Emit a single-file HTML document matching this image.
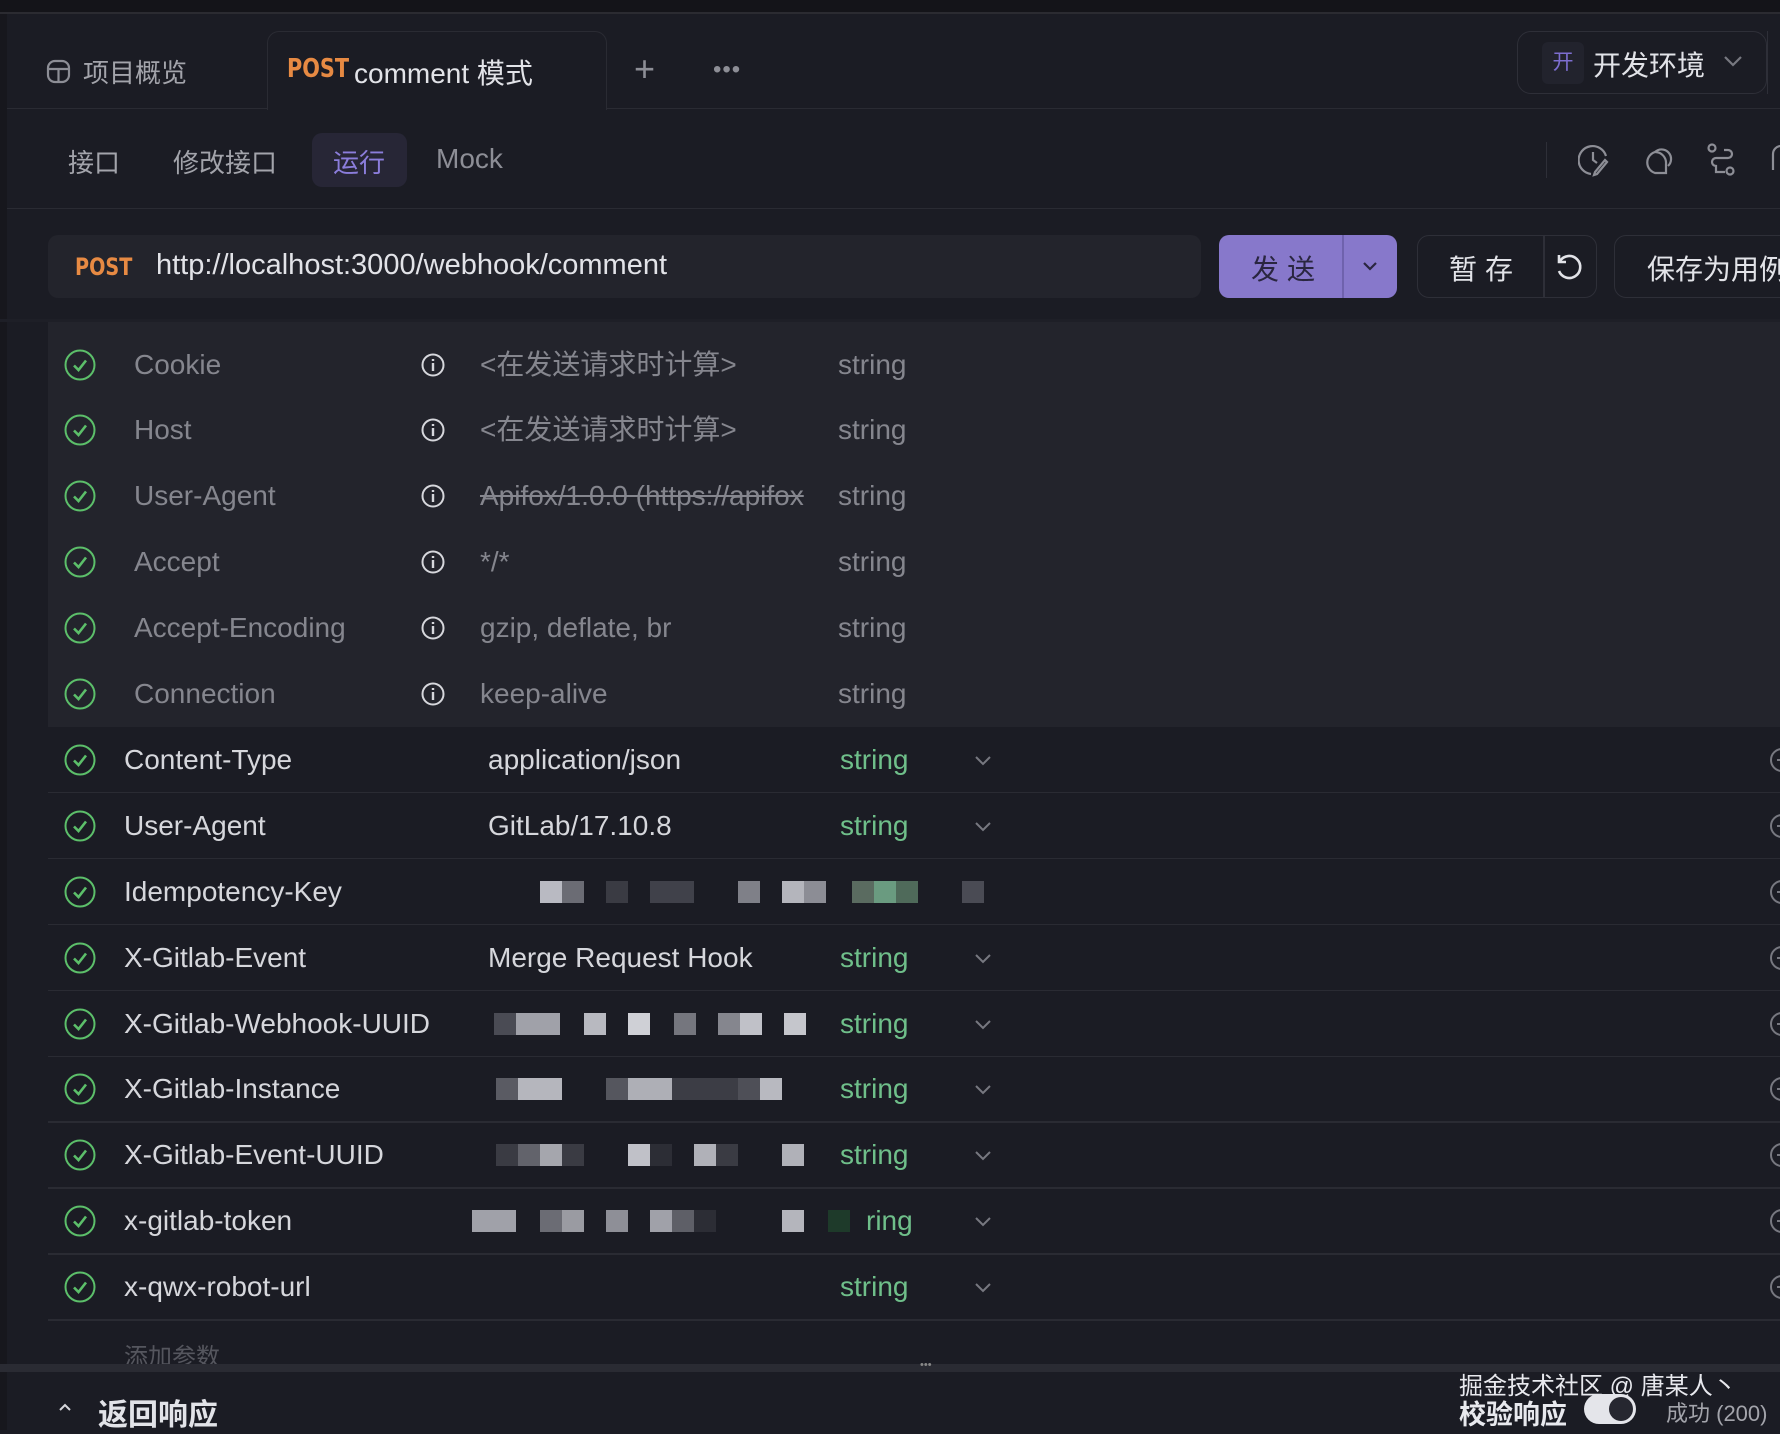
<!DOCTYPE html>
<html><head><meta charset="utf-8"><style>
*{margin:0;padding:0;box-sizing:border-box}
body{width:1780px;height:1430px;overflow:hidden;background:#1b1c24;font-family:"Liberation Sans","Noto Sans CJK SC",sans-serif;color:#d6d7dc;position:relative}
.a{position:absolute;white-space:nowrap}
.row{position:absolute;left:48px;right:0;height:66px}
.row .ck{position:absolute;left:16px;top:17px}
.row .t{position:absolute;top:0;line-height:66px;font-size:28px}
.blk{position:absolute;height:22px}
.post{font-family:"DejaVu Sans","Liberation Sans",sans-serif;font-weight:bold;color:#e78a43;display:inline-block;transform:scaleX(0.8);transform-origin:left}
</style></head><body>
<div class="a" style="left:0;top:0;width:1780px;height:12px;background:#141419"></div>
<div class="a" style="left:0;top:12px;width:1780px;height:2px;background:#2b2b31"></div>
<div class="a" style="left:0;top:14px;width:7px;height:1416px;background:#17171d"></div>
<div class="a" style="left:7px;top:108px;width:1773px;height:1px;background:#2a2b33"></div>
<div class="a" style="left:267px;top:31px;width:340px;height:79px;background:#1b1c24;border:1px solid #2a2b33;border-bottom:none;border-radius:12px 12px 0 0"></div>
<svg class="a" style="left:46px;top:59px" width="25" height="25" viewBox="0 0 25 25"><rect x="2" y="2" width="21" height="21" rx="7" fill="none" stroke="#8d8e96" stroke-width="2.2"/><path d="M2 10H23M12.5 10V23" stroke="#8d8e96" stroke-width="2.2" fill="none"/></svg>
<div class="a" style="left:83px;top:53px;font-size:26px;color:#a3a4ab">项目概览</div>
<div class="a post" style="left:287px;top:54px;font-size:26px">POST</div>
<div class="a" style="left:354px;top:52px;font-size:28px;color:#e2e3e8">comment 模式</div>
<div class="a" style="left:634px;top:48px;font-size:36px;color:#8d8e96;font-weight:300">+</div>
<div class="a" style="left:713px;top:56px;font-size:24px;color:#8d8e96;letter-spacing:1px">•••</div>
<div class="a" style="left:1517px;top:31px;width:250px;height:63px;border:1.5px solid #2e2f38;border-radius:14px"></div>
<div class="a" style="left:1767px;top:31px;width:1px;height:63px;background:#2e2f38"></div>
<div class="a" style="left:1542px;top:42px;width:42px;height:42px;background:#22232d;border-radius:6px;color:#7d6ed0;font-size:21px;line-height:42px;text-align:center">开</div>
<div class="a" style="left:1593px;top:44px;font-size:28px;color:#e2e3e8">开发环境</div>
<svg class="a" style="left:1723px;top:55px" width="20" height="12"><path d="M2 2L10 10L18 2" stroke="#777880" stroke-width="2.2" fill="none"/></svg>
<div class="a" style="left:68px;top:143px;font-size:26px;color:#a3a4ab">接口</div>
<div class="a" style="left:173px;top:143px;font-size:26px;color:#a3a4ab">修改接口</div>
<div class="a" style="left:312px;top:133px;width:95px;height:54px;background:#272636;border-radius:10px"></div>
<div class="a" style="left:333px;top:143px;font-size:26px;color:#8b7ddb">运行</div>
<div class="a" style="left:436px;top:143px;font-size:28px;color:#8d8e96">Mock</div>
<div class="a" style="left:1546px;top:142px;width:1px;height:36px;background:#2e2f38"></div>
<svg class="a" style="left:1578px;top:142px" width="32" height="36" viewBox="0 0 32 36" fill="none" stroke="#8d8e96" stroke-width="2.2"><path d="M13 32A14 14 0 1 1 28 14"/><path d="M15 10V18L19 21"/><path d="M29 20L19 32L16 33L17 30L27 18Z"/></svg>
<svg class="a" style="left:1641px;top:142px" width="34" height="36" viewBox="0 0 34 36" fill="none" stroke="#8d8e96" stroke-width="2.2"><path d="M14 10A11 11 0 0 1 25 22L25 31L14 31A11 11 0 0 1 14 10Z"/><path d="M14 10A9 9 0 1 1 27 24"/></svg>
<svg class="a" style="left:1706px;top:142px" width="32" height="36" viewBox="0 0 32 36" fill="none" stroke="#8d8e96" stroke-width="2.2"><circle cx="6" cy="6" r="3.5"/><circle cx="24" cy="29" r="3.5"/><path d="M18 8H22A4 4 0 0 1 22 16H10A4 4 0 0 0 10 24V30H19"/></svg>
<svg class="a" style="left:1770px;top:142px" width="12" height="36"><path d="M11 4A8 8 0 0 0 3 12V28" stroke="#8d8e96" stroke-width="2.2" fill="none"/></svg>
<div class="a" style="left:7px;top:208px;width:1773px;height:1px;background:#2a2b33"></div>
<div class="a" style="left:48px;top:235px;width:1153px;height:63px;background:#23242c;border-radius:10px"></div>
<div class="a post" style="left:75px;top:253px;font-size:24px">POST</div>
<div class="a" style="left:156px;top:249px;font-size:29px;color:#e2e3e8">http://localhost:3000/webhook/comment</div>
<div class="a" style="left:1219px;top:235px;width:178px;height:63px;background:#8778cb;border-radius:10px"></div>
<div class="a" style="left:1342px;top:235px;width:2px;height:63px;background:#6f62ad"></div>
<div class="a" style="left:1251px;top:248px;font-size:28px;color:#2a2640;letter-spacing:8px">发送</div>
<svg class="a" style="left:1362px;top:261px" width="16" height="11"><path d="M2 2L8 8L14 2" stroke="#2a2640" stroke-width="2.2" fill="none"/></svg>
<div class="a" style="left:1417px;top:235px;width:180px;height:63px;border:1.5px solid #2e2f38;border-radius:12px"></div>
<div class="a" style="left:1543px;top:235px;width:1.5px;height:63px;background:#2e2f38"></div>
<div class="a" style="left:1449px;top:248px;font-size:28px;color:#e2e3e8;letter-spacing:8px">暂存</div>
<svg class="a" style="left:1554px;top:252px" width="30" height="30" viewBox="0 0 30 30" fill="none" stroke="#e2e3e8" stroke-width="2.6"><path d="M6 9A11 11 0 1 1 5 19"/><path d="M5 3V10H12"/></svg>
<div class="a" style="left:1614px;top:235px;width:200px;height:63px;border:1.5px solid #2e2f38;border-radius:12px"></div>
<div class="a" style="left:1647px;top:248px;font-size:28px;color:#e2e3e8">保存为用例</div>
<div class="a" style="left:48px;top:322px;width:1732px;height:405px;background:#23242c"></div>
<div class="a" style="left:0;top:319px;width:1780px;height:3px;background:#1e1f27"></div>
<div id="rows"></div>
<div class="a" style="left:124px;top:1337px;font-size:24px;color:#55565e">添加参数</div>
<div class="a" style="left:0;top:1364px;width:1780px;height:8px;background:#2a2b33"></div>
<div class="a" style="left:920px;top:1359px;font-size:11px;color:#888">•••</div>
<svg class="a" style="left:58px;top:1402px" width="14" height="10"><path d="M2 8L7 3L12 8" stroke="#d6d7dc" stroke-width="2" fill="none"/></svg>
<div class="a" style="left:98px;top:1390px;font-size:30px;color:#e2e3e8;font-weight:bold">返回响应</div>
<div class="a" style="left:1459px;top:1366px;font-size:24px;color:#e8e9ee">掘金技术社区 @ 唐某人丶</div>
<div class="a" style="left:1459px;top:1393px;font-size:27px;color:#e8e9ee;font-weight:bold">校验响应</div>
<div class="a" style="left:1584px;top:1394px;width:52px;height:30px;background:#e4e5ea;border-radius:15px"></div>
<div class="a" style="left:1609px;top:1397px;width:24px;height:24px;background:#262730;border-radius:50%"></div>
<div class="a" style="left:1666px;top:1396px;font-size:22px;color:#a3a4ab">成功 (200)</div>
<script>
const rows=[
['Cookie','<在发送请求时计算>',0],['Host','<在发送请求时计算>',0],['User-Agent','Apifox/1.0.0 (https://apifox',0,1],['Accept','*/*',0],['Accept-Encoding','gzip, deflate, br',0],['Connection','keep-alive',0],
['Content-Type','application/json',1],['User-Agent','GitLab/17.10.8',1],['Idempotency-Key','',2],['X-Gitlab-Event','Merge Request Hook',1],['X-Gitlab-Webhook-UUID','',1],['X-Gitlab-Instance','',1],['X-Gitlab-Event-UUID','',1],['x-gitlab-token','',3],['x-qwx-robot-url','',1]];
const blocks={
8:[[540,'#b9bac2',22],[562,'#6b6c74',22],[606,'#3a3b43',22],[650,'#40414a',44],[738,'#7f8088',22],[782,'#b4b5bc',22],[804,'#8c8d95',22],[852,'#5a6b60',22],[874,'#6a9b80',22],[896,'#4f6a5a',22],[962,'#4a4b54',22]],
10:[[494,'#4a4b54',22],[516,'#a0a1a9',44],[584,'#b8b9c0',22],[628,'#cfd0d6',22],[674,'#75767e',22],[718,'#85868e',22],[740,'#c0c1c8',22],[784,'#c5c6cc',22]],
11:[[496,'#5a5b63',22],[518,'#b5b6bd',44],[606,'#55565e',22],[628,'#aeafb6',44],[672,'#3c3d45',88],[738,'#4e4f57',22],[760,'#b8b9c0',22]],
12:[[496,'#3a3b43',22],[518,'#62636b',22],[540,'#a5a6ad',22],[562,'#3a3b43',22],[628,'#c0c1c8',22],[650,'#2c2d35',22],[694,'#b0b1b8',22],[716,'#3a3b43',22],[782,'#b0b1b8',22]],
13:[[472,'#a0a1a9',44],[540,'#6b6c74',22],[562,'#9a9ba2',22],[606,'#8e8f97',22],[650,'#a0a1a9',22],[672,'#5e5f67',22],[694,'#2c2d35',22],[782,'#b4b5bc',22],[828,'#1e3a2a',22]]};
let h='';
rows.forEach((r,i)=>{
 const top=331.5+65.9*i, auto=r[2]===0;
 const chk=`<svg class="ck" width="32" height="32" viewBox="0 0 32 32"><circle cx="16" cy="16" r="14.5" fill="none" stroke="#5cbf6a" stroke-width="2"/><path d="M10 16.5L14.5 21L22 11.5" fill="none" stroke="#5cbf6a" stroke-width="2.6"/></svg>`;
 h+=`<div class="row" style="top:${top}px">${chk}`;
 if(auto){
  h+=`<div class="t" style="left:86px;color:#85868e">${r[0]}</div>`;
  h+=`<svg class="a" style="left:373px;top:21px" width="24" height="24" viewBox="0 0 24 24"><circle cx="12" cy="12" r="10.5" fill="none" stroke="#d6d7dc" stroke-width="2"/><path d="M12 10V18M12 6V8" stroke="#d6d7dc" stroke-width="2.4"/></svg>`;
  h+=`<div class="t" style="left:432px;width:357px;overflow:hidden;color:#85868e;${r[3]?'text-decoration:line-through':''}">${r[1].replace('<','&lt;').replace('>','&gt;')}</div>`;
  h+=`<div class="t" style="left:790px;color:#85868e">string</div>`;
 }else{
  h+=`<div class="t" style="left:76px;color:#d6d7dc">${r[0]}</div>`;
  if(r[1])h+=`<div class="t" style="left:440px;color:#d6d7dc">${r[1]}</div>`;
  (blocks[i]||[]).forEach(b=>{h+=`<div class="blk" style="left:${b[0]-48}px;top:22px;width:${b[2]}px;background:${b[1]}"></div>`});
  if(r[2]===1)h+=`<div class="t" style="left:792px;color:#6fbf8a">string</div>`;
  if(r[2]===3)h+=`<div class="t" style="left:818px;color:#6fbf8a">ring</div>`;
  if(r[2]!==2)h+=`<svg class="a" style="left:926px;top:28px" width="18" height="11"><path d="M2 2L9 9L16 2" stroke="#777880" stroke-width="2" fill="none"/></svg>`;
  h+=`<svg class="a" style="left:1720px;top:20px" width="26" height="26"><circle cx="14" cy="13" r="11" fill="none" stroke="#777880" stroke-width="2"/><path d="M9 13H19" stroke="#777880" stroke-width="2"/></svg>`;
  h+=`<div class="a" style="left:0;top:65px;width:1732px;height:1.5px;background:#2a2b33"></div>`;
 }
 h+='</div>';
});
document.getElementById('rows').innerHTML=h;
</script>
</body></html>
